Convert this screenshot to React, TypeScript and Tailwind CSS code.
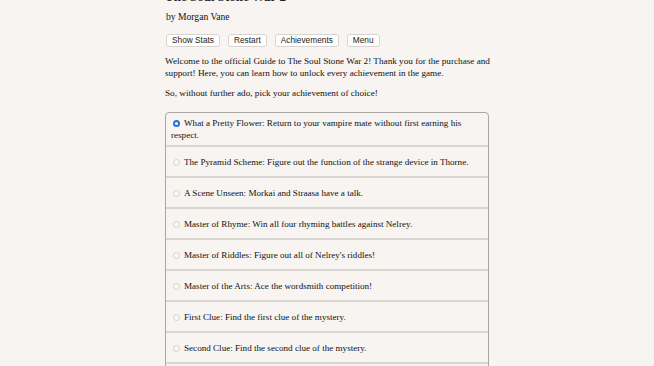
import React from "react";

const choices = [
  "What a Pretty Flower: Return to your vampire mate without first earning his respect.",
  "The Pyramid Scheme: Figure out the function of the strange device in Thorne.",
  "A Scene Unseen: Morkai and Straasa have a talk.",
  "Master of Rhyme: Win all four rhyming battles against Nelrey.",
  "Master of Riddles: Figure out all of Nelrey's riddles!",
  "Master of the Arts: Ace the wordsmith competition!",
  "First Clue: Find the first clue of the mystery.",
  "Second Clue: Find the second clue of the mystery.",
  "Third Clue: Find the third clue of the mystery.",
];

export default function App() {
  return (
    <div
      className="w-full bg-[#f7f4f1] text-[#111] overflow-hidden h-[366px]"
      style={{ fontFamily: '"Liberation Serif", "Times New Roman", serif' }}
    >
      <div className="w-[324px] ml-[165px]">
        <div className="text-[13px] leading-[16px] mt-[-11px] whitespace-nowrap font-bold text-[#222]">
          The Soul Stone War 2
        </div>
        <div className="text-[9.6px] leading-[12px] mt-[6px] ml-[1px]">by Morgan Vane</div>
        <div
          className="flex gap-[8px] mt-[11px] ml-[1px]"
          style={{ fontFamily: '"Liberation Sans", Arial, sans-serif' }}
        >
          {["Show Stats", "Restart", "Achievements", "Menu"].map((b) => (
            <div
              key={b}
              className="h-[13px] px-[5px] flex items-center bg-white border border-[#d8d5d1] rounded-[3px] text-[8.3px] text-[#222]"
            >
              {b}
            </div>
          ))}
        </div>
        <p className="text-[9.2px] leading-[12px] mt-[8px] whitespace-nowrap">
          Welcome to the official Guide to The Soul Stone War 2! Thank you for the purchase and
          <br />
          support! Here, you can learn how to unlock every achievement in the game.
        </p>
        <p className="text-[9.2px] leading-[12px] mt-[8px]">So, without further ado, pick your achievement of choice!</p>
        <div className="mt-[13px] border border-[#a9a7a4] rounded-[4px] overflow-hidden">
          {choices.map((c, i) => (
            <div
              key={c}
              className={`flex items-center min-h-[31px] py-[4px] px-[5px] text-[9.1px] leading-[12px] ${
                i > 0 ? "border-t-[2px] border-[#d9d6d2]" : ""
              }`}
            >
              <div>
                {i === 0 ? (
                  <span className="inline-block align-[-1px] w-[7px] h-[7px] rounded-full bg-[#1a73e8] mr-[4px] ml-[2px] relative">
                    <span className="absolute left-[2px] top-[2px] w-[3px] h-[3px] rounded-full bg-white" />
                  </span>
                ) : (
                  <span className="inline-block align-[-1px] w-[7px] h-[7px] rounded-full border border-[#d4d1cd] bg-[#f9f8f6] mr-[4px] ml-[2px]" />
                )}
                {c}
              </div>
            </div>
          ))}
        </div>
      </div>
    </div>
  );
}
